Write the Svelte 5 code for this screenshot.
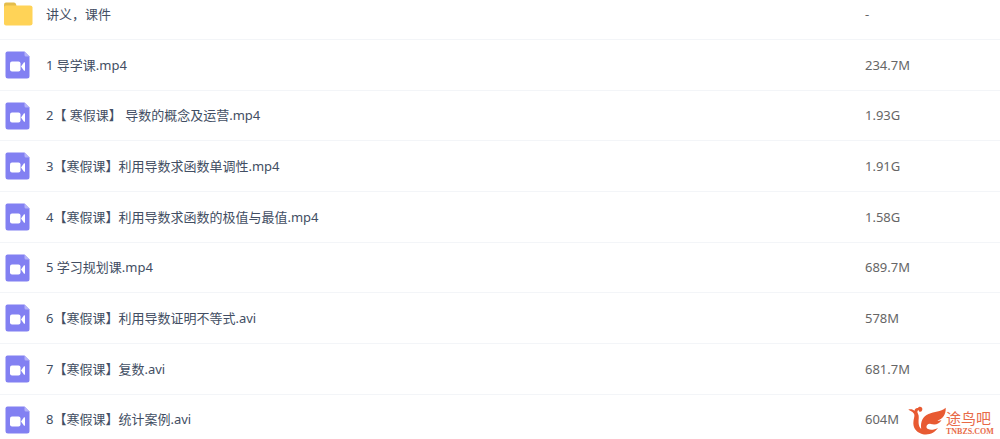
<script lang="ts">
  type FileRow = { name: string; size: string; folder?: boolean };

  const files: FileRow[] = [
    { name: '讲义，课件', size: '-', folder: true },
    { name: '1 导学课.mp4', size: '234.7M' },
    { name: '2【 寒假课】 导数的概念及运营.mp4', size: '1.93G' },
    { name: '3【寒假课】利用导数求函数单调性.mp4', size: '1.91G' },
    { name: '4【寒假课】利用导数求函数的极值与最值.mp4', size: '1.58G' },
    { name: '5 学习规划课.mp4', size: '689.7M' },
    { name: '6【寒假课】利用导数证明不等式.avi', size: '578M' },
    { name: '7【寒假课】复数.avi', size: '681.7M' },
    { name: '8【寒假课】统计案例.avi', size: '604M' },
  ];
</script>

<main class="page">
  <table class="file-list">
    <tbody>
      {#each files as file}
        <tr>
          <td class="icon-cell">
            {#if file.folder}
              <svg class="icon" width="30" height="24" viewBox="0 0 30 24" aria-hidden="true">
                <path d="M1 8V2.5Q1 .5 3 .5H11Q12.5 .5 13 2L13.5 4V8Z" fill="#e4bd4c" />
                <path d="M1 5.5Q1 3.5 3 3.5H27Q29.5 3.5 29.5 5.5V21.5Q29.5 23.5 27 23.5H3Q1 23.5 1 21.5Z" fill="#ffd357" />
              </svg>
            {:else}
              <svg class="icon" width="30" height="28" viewBox="0 0 30 28" aria-hidden="true">
                <path d="M4.5 .5H21.5L26.5 5.5V25Q26.5 27.5 24 27.5H5Q2.5 27.5 2.5 25V2.5Q2.5 .5 4.5 .5Z" fill="#8280f2" />
                <path d="M21.5 .5L26.5 5.5H23Q21.5 5.5 21.5 4Z" fill="#b4b2f8" />
                <rect x="7" y="10.5" width="10.5" height="10" rx="2" fill="#fff" />
                <path d="M18 15.5L21 11.3Q22 10.8 22 12V19Q22 20.2 21 19.7Z" fill="#fff" />
              </svg>
            {/if}
          </td>
          <td class="name">{file.name}</td>
          <td class="size">{file.size}</td>
        </tr>
      {/each}
    </tbody>
  </table>

  <div class="watermark">
    <svg width="38" height="30" viewBox="0 0 38 30" aria-hidden="true">
      <path
        d="M.3 3.6C3 2.6 5 3.3 6.6 4.8C6.8 2.8 8.2 1.8 10 2.1C10.4 .6 12.6 .2 13.8 1.5C15 3 14.3 5.4 12.5 5.8C11.3 6 10.6 5.1 10.9 4.2C9.2 4.1 9 6 10 7.8C11.5 10.5 10.3 13.5 10.6 17C10.8 19.5 11.6 21.5 13.2 23C12.2 15.5 15 10.3 20.5 8C26.5 5.6 32.5 6.2 37.7 1.8C38 8.5 35 12.8 29.5 14.6C31 15 32.3 14.7 33.5 14C31.5 18 27.5 19.3 22.8 18C20.2 17.3 18 19.3 18.5 21.6C19.3 24.2 25.5 24.7 30 21.7C26.8 27 20.5 29.6 14 27.9C7.5 26 4.6 20.8 5.5 15C6 11.5 7.2 9.2 5.6 7.2C4.3 5.6 2.2 5.3 .3 3.6Z"
        fill="#e85a32"
      />
    </svg>
    <div class="brand">
      <span class="brand-name">途鸟吧</span>
      <span class="brand-url">TNBZS.COM</span>
    </div>
  </div>
</main>

<style>
  :global(body) {
    margin: 0;
    background: #fff;
  }

  .page {
    position: relative;
    height: 100vh;
    overflow: hidden;
    font-family: 'Noto Sans', 'Noto Sans CJK SC', sans-serif;
    font-size: 13px;
    line-height: 20px;
  }

  /* the list is scrolled a little, so the first row is cut at the top */
  .file-list {
    width: 100%;
    margin-top: -11px;
    border-collapse: separate;
    border-spacing: 0;
    table-layout: fixed;
  }

  td {
    height: 51px;
    box-sizing: border-box;
    padding: 0 0 1px;
    border-bottom: 1px solid #f3f5f8;
    vertical-align: middle;
    white-space: nowrap;
  }

  tr:nth-child(3n) td {
    height: 50px;
  }

  .icon-cell {
    width: 46px;
    padding: 0 0 0 3px;
    box-sizing: border-box;
  }

  .icon {
    display: block;
  }

  .name {
    color: #424e63;
  }

  .size {
    width: 135px;
    color: #666;
  }

  .watermark {
    position: absolute;
    right: 8px;
    bottom: 3px;
    display: flex;
    align-items: flex-end;
    color: #e86a48;
  }

  .brand {
    display: flex;
    flex-direction: column;
    width: 46px;
  }

  .brand-name {
    font-size: 15px;
    line-height: 20px;
  }

  .brand-url {
    font-family: 'Liberation Serif', serif;
    font-size: 8px;
    font-weight: 700;
    line-height: 8px;
  }
</style>
